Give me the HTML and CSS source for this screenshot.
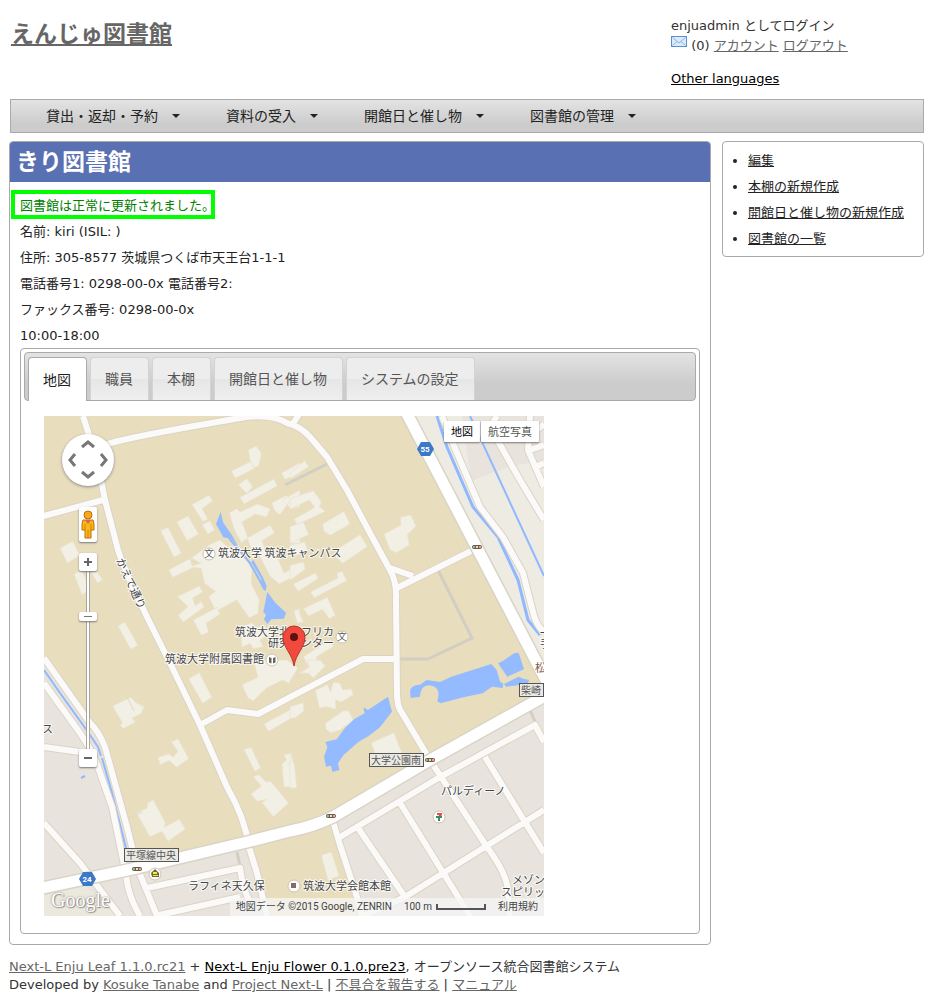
FILE: index.html
```html
<!DOCTYPE html>
<html lang="ja">
<head>
<meta charset="utf-8">
<meta name="viewport" content="width=device-width, initial-scale=1">
<title>きり図書館 - えんじゅ図書館</title>
<link rel="stylesheet" href="styles.css">
</head>
<body>
<header class="header">
  <h1 class="site-title"><a href="#">えんじゅ図書館</a></h1>
  <div class="account">
    <p>enjuadmin としてログイン</p>
    <p>
      <svg class="mail" viewBox="0 0 16 11" aria-hidden="true"><rect x=".5" y=".5" width="15" height="10" fill="#dcebfb" stroke="#5b8fce"/><path d="M1.500 1.500 8 7l6.500-5.500M1.500 9.500 6 5.500M14.500 9.500 10 5.500" fill="none" stroke="#8db4e2"/></svg>
      (0) <a href="#">アカウント</a> <a href="#">ログアウト</a>
    </p>
    <p class="languages"><a href="#">Other languages</a></p>
  </div>
</header>

<nav class="menu">
  <a href="#">貸出・返却・予約</a>
  <a href="#">資料の受入</a>
  <a href="#">開館日と催し物</a>
  <a href="#">図書館の管理</a>
</nav>

<div class="columns">
  <main class="library">
    <h2 class="library-title">きり図書館</h2>
    <div class="library-body">
      <p class="notice">図書館は正常に更新されました。</p>
      <p>名前: kiri (ISIL: )</p>
      <p>住所: 305-8577 茨城県つくば市天王台1-1-1</p>
      <p>電話番号1: 0298-00-0x 電話番号2:</p>
      <p>ファックス番号: 0298-00-0x</p>
      <p>10:00-18:00</p>
      <section class="tabs">
        <div class="tab-list" role="tablist">
          <button type="button" role="tab" class="tab active" aria-selected="true">地図</button>
          <button type="button" role="tab" class="tab" aria-selected="false">職員</button>
          <button type="button" role="tab" class="tab" aria-selected="false">本棚</button>
          <button type="button" role="tab" class="tab" aria-selected="false">開館日と催し物</button>
          <button type="button" role="tab" class="tab" aria-selected="false">システムの設定</button>
        </div>
        <div class="panel" role="tabpanel">
          <div class="map">
            <svg class="map-canvas" viewBox="44 416 500 500" aria-label="地図">
              <rect x="44" y="416" width="500" height="500" fill="#e8ddbd"/>
              <!-- districts -->
              <path d="M44 658 90 723 105 747 127 827 137 868 247 842 267 916H44Z" fill="#e8e4dd"/>
              <path d="M403 416H544V675L538 672Z" fill="#eeebe3"/>
              <path d="M462 416H544V460L508 467 471 481Z" fill="#e8e4dd"/>
              <path d="M333 817 430 760 544 695V916H362L340 847Z" fill="#e8e4dd"/>
              <path d="M44 889 80 881 120 916H44Z" fill="#ebe8dd"/>

              <!-- buildings -->
              <g fill="#f2efe4" stroke="#e8e3d1" stroke-width="2">
                <g transform="translate(40 410) scale(.3333)">
                  <path d="M625 120 648 108 664 130 656 168 640 174 630 150ZM574 183 634 154 644 175 586 205ZM595 224 620 206 638 230 620 250ZM600 262 702 207 712 228 612 282ZM724 190 780 158V190L735 208Z"/>
                  <path d="M456 284 506 256 518 272 486 296 504 328 488 334ZM410 336 444 318 476 372 442 392ZM486 344 510 332 524 360 504 372ZM362 362 384 352 424 430 402 442ZM60 414 98 394 120 436 82 460ZM102 492 126 480 150 540 126 554ZM150 480 166 478 188 510 172 518ZM234 648 254 636 294 706 272 718Z"/>
                  <path d="M568 308 590 296 600 306 652 282 690 296 680 322 646 312 606 336 624 384 604 398 582 356ZM622 384 690 346 704 368 666 392 676 420 702 418 732 490 780 460V490L718 522 690 498 660 440 638 428ZM696 278 740 256 752 270 720 314 702 300ZM728 270 780 240V290L752 296ZM764 334 780 322V350ZM748 382 780 366V400H756Z"/>
                  <path d="M386 480 450 446 456 468 484 460 454 444 506 406 540 390 566 414 594 404 636 480 634 520 658 570 654 610 628 624 590 570 528 604 506 560 526 544 494 520 484 476 462 472 398 502Z"/>
                  <path d="M412 560 478 528 488 546 458 564 466 588 484 574 492 592 430 636 414 616 444 590ZM460 630 532 592 540 612 498 640 506 666 484 676ZM602 652 636 638 650 654 672 644 688 672 660 690 670 710 640 716 630 700 606 712ZM762 610 780 596V640Z"/>
                </g>
                <g transform="translate(290 410) scale(.3333)">
                  <path d="M0 190 44 152 56 170 0 206ZM0 266 70 242 94 276 88 290 106 304 26 342 12 328 74 292 58 270 0 298ZM98 342 162 304 180 342 120 376 102 364ZM0 350 40 336 56 374 0 400ZM144 416 210 374 232 410 158 460 136 440ZM0 406 44 396 54 424 0 442ZM282 372 332 346V322L362 314 378 348 352 374 358 404 320 428 300 420Z"/>
                  <path d="M0 466 40 456 46 478 0 510ZM10 522 78 488 84 506 24 544ZM62 546 144 504 140 490 156 484 170 512 72 564ZM40 596 112 562 136 616 118 626 98 598 56 618ZM12 602 24 598 40 636 22 640ZM40 740 120 690 130 710 80 740 80 770 60 776Z"/>
                </g>
                <g transform="translate(40 660) scale(.3333)">
                  <path d="M446 56 478 38 516 112 488 130ZM218 138 272 112 290 130 312 140 304 160 276 174 286 186 250 206 240 196 248 188 230 160ZM606 74 654 52 640 0H740L774 24 746 70 728 60 680 84 640 122 624 114ZM672 192 734 158 780 134V160L686 214ZM354 292 386 282 400 292 414 274 394 246 414 236 446 296 410 322 388 302 360 314Z"/>
                  <path d="M290 460 322 444V430L340 420 376 488 372 502 418 478 436 508 384 544 366 514 330 530ZM612 268 634 262 662 324 644 334ZM732 284 754 280 758 296 748 310 770 382 732 380 726 312 740 300ZM640 350 656 344 678 366 692 364 746 430 700 470 666 428 680 418 652 424 632 402 664 378Z"/>
                </g>
                <g transform="translate(290 660) scale(.3333)">
                  <path d="M28 40 60 20 52 0H90L106 18 70 54 56 40ZM76 92 112 74 122 96 130 66 150 70 158 90 184 86 190 104 154 126 136 120 138 148 108 140 88 144ZM0 140 40 128 42 152 16 174H0ZM106 190 160 152 176 152 190 180 150 210 122 218 108 208ZM244 248 312 218 336 280 256 284ZM0 282 14 316 20 384H0ZM94 586 124 576 148 648 114 660Z"/>
                </g>
              </g>
              <path d="M121 822 142 812M127 697 134 711" stroke="#ded8c6" fill="none"/>

              <!-- footpaths -->
              <g fill="none" stroke="#d2cec4" stroke-width="3">
                <path d="M285 485 329 463M438 570 472 638 428 659H400M237 852 240 866M530 710 536 724"/>
              </g>

              <!-- water -->
              <g fill="none" stroke="#8fb8ff">
                <path d="M44 670 60 693 88 732 98 747 101 756M102 758 112 793 126 848M81 778 85 776" stroke-width="2"/>
                <path d="M437 416 447 447 473 507 498 537 518 580 528 620 540 635" stroke-width="3"/>
                <path d="M470 416 544 576" stroke-width="2"/>
                <path d="M229 538 250 563 265 590" stroke-width="2"/>
              </g>
              <g fill="#94bbff">
                <path transform="translate(40 410) scale(.3333)" d="M542 306 550 338 576 376 596 412 574 386 550 382 528 342ZM640 450 668 500 680 528 676 544 664 528 664 508 634 456ZM682 546 706 578 738 608 732 626 694 628 682 642 672 628 678 614 670 606Z"/>
                <path transform="translate(290 660) scale(.3333)" d="M294 110 306 155 270 202 236 228 205 246 160 286 144 310 148 330 127 336 123 317 108 320 102 290 112 262 106 246 140 238 165 204 192 178 224 160 220 142 234 150ZM360 92Q364 76 390 74L410 60 450 66 484 50 604 12 620 30 630 64 640 72 638 84 606 80 578 100 520 112 452 130 442 124Q456 78 416 76 392 76 390 110L362 114ZM624 10 640 2 672-20 686-22 702 28 652 50ZM642 72 686 50 700 56 718 60 712 72 648 80Z"/>
              </g>

              <!-- roads: casing, then surface -->
              <g fill="none" stroke-linejoin="round">
                <path stroke="#dad4c6" stroke-width="8" d="M83 416 89 435 102 485 105 500 118 550Q124 570 150 623L170 663 200 725 227 787Q245 818 249 847L257 873 267 916M108 444Q118 440 183 428L240 418Q270 413 287 423 300 426 310 437L327 457 347 490 370 533 390 570Q397 582 396 600L397 693Q397 707 402 713L430 760 487 847Q508 875 508 893L510 916M293 424 299 414M40 517 103 500M397 588 477 548M390 568 413 576M200 725 227 710 258 714 300 692 363 659H397M44 658 90 723Q98 730 105 747L127 827 137 867 157 916M44 683 80 733Q92 750 98 767L112 807 123 860 128 887Q132 903 140 916M44 747 80 752M44 823 80 863 120 916M147 888 240 868Q243 890 250 902M155 916 240 897M332 818 340 845 357 897 362 916M340 837 440 777 535 725 544 742M485 757 544 853M400 803 470 916M358 828 405 897M363 916 405 897 544 810M442 416 457 453 480 507 503 537 523 573 533 612Q536 625 544 632M497 416 490 427 520 480 544 520M530 416 528 450 544 487M530 450 544 445M534 468 544 463M533 433 544 424"/>
                <path stroke="#fbfaf8" stroke-width="6" d="M83 416 89 435 102 485 105 500 118 550Q124 570 150 623L170 663 200 725 227 787Q245 818 249 847L257 873 267 916M108 444Q118 440 183 428L240 418Q270 413 287 423 300 426 310 437L327 457 347 490 370 533 390 570Q397 582 396 600L397 693Q397 707 402 713L430 760 487 847Q508 875 508 893L510 916M293 424 299 414M40 517 103 500M397 588 477 548M390 568 413 576M200 725 227 710 258 714 300 692 363 659H397M44 658 90 723Q98 730 105 747L127 827 137 867 157 916M44 683 80 733Q92 750 98 767L112 807 123 860 128 887Q132 903 140 916M44 747 80 752M44 823 80 863 120 916M147 888 240 868Q243 890 250 902M155 916 240 897M332 818 340 845 357 897 362 916M340 837 440 777 535 725 544 742M485 757 544 853M400 803 470 916M358 828 405 897M363 916 405 897 544 810M442 416 457 453 480 507 503 537 523 573 533 612Q536 625 544 632M497 416 490 427 520 480 544 520M530 416 528 450 544 487M530 450 544 445M534 468 544 463M533 433 544 424"/>
                <path stroke="#dad4c6" stroke-width="14" d="M403 406 477 548 548 684M38 889 137 868 247 842 290 831Q312 827 333 817L430 760 550 693"/>
                <path stroke="#fff" stroke-width="11" d="M403 406 477 548 548 684M38 889 137 868 247 842 290 831Q312 827 333 817L430 760 550 693"/>
              </g>

              <!-- traffic signals -->
              <g fill="#6b5a53"><rect x="472" y="545" width="10" height="4" rx="2"/><rect x="425" y="758" width="10" height="4" rx="2"/><rect x="326" y="814" width="10" height="4" rx="2"/><rect x="132" y="867" width="10" height="4" rx="2"/></g>
              <g fill="#7fc68b"><rect x="473" y="546" width="2" height="2"/><rect x="426" y="759" width="2" height="2"/><rect x="327" y="815" width="2" height="2"/><rect x="133" y="868" width="2" height="2"/></g>
              <g fill="#ffe680"><rect x="476" y="546" width="2" height="2"/><rect x="429" y="759" width="2" height="2"/><rect x="330" y="815" width="2" height="2"/><rect x="136" y="868" width="2" height="2"/></g>
              <g fill="#f59a94"><rect x="479" y="546" width="2" height="2"/><rect x="432" y="759" width="2" height="2"/><rect x="333" y="815" width="2" height="2"/><rect x="139" y="868" width="2" height="2"/></g>

              <!-- route shields -->
              <g fill="#3b78c9"><path d="M421 442H430L434 449 430 456H421L417 449Z"/><path d="M83 872H92L96 879 92 886H83L79 879Z"/></g>
              <g class="shield"><text x="425" y="452">55</text><text x="87" y="882">24</text></g>

              <!-- places -->
              <g fill="#fff" stroke="#cbc4b2">
                <circle cx="209" cy="554" r="6"/><circle cx="342" cy="637" r="6"/><circle cx="272" cy="660" r="6"/><circle cx="439" cy="817" r="6"/><circle cx="294" cy="886" r="6"/><circle cx="155" cy="874" r="6"/>
              </g>
              <path d="M269 657 271.500 658V663.500L269 662.500ZM275.500 657 273 658V663.500L275.500 662.500Z" fill="#6b6560"/>
              <rect x="291" y="883" width="5" height="5" fill="#8b6b61"/>
              <path d="M437 813H442V815L440 818H438L439 815H437Z" fill="#d9534a"/><path d="M436 816H442V818H436ZM438 818H440V821H438Z" fill="#3b8a62"/>
              <path d="M151 873 155 869 159 873V877H152Z" fill="#6e6a3c"/><path d="M153 872H157V874H153ZM153 875H158V876H153Z" fill="#ffe93b"/>
              <g class="kanji-icon"><text x="209" y="557">文</text><text x="342" y="640">文</text></g>
              <g class="label">
                <text x="218" y="557">筑波大学 筑波キャンパス</text>
                <text x="235" y="636">筑波大学北アフリカ</text>
                <text x="268" y="647">研究センター</text>
                <text x="165" y="663">筑波大学附属図書館</text>
                <text x="188" y="890">ラフィネ天久保</text>
                <text x="303" y="890">筑波大学会館本館</text>
                <text x="441" y="795">パルディーノ</text>
                <text x="512" y="884">メゾン</text>
                <text x="501" y="896">スピリッ</text>
                <text x="42" y="733">ス</text>
                <text x="540" y="637">一</text>
                <text x="540" y="648">手</text>
                <text x="535" y="672" fill="#855548">松</text>
                <text class="street" x="132" y="583" transform="rotate(65 132 583)">かえで通り</text>
              </g>
              <g fill="#ebe9e4" stroke="#555"><rect x="369.500" y="753.500" width="54" height="13"/><rect x="124.500" y="848.500" width="54" height="13"/><rect x="519.500" y="683.500" width="24" height="13"/></g>
              <g class="crossing"><text x="371" y="764">大学公園南</text><text x="126" y="859">平塚線中央</text><text x="521" y="694">柴崎</text></g>

              <!-- marker -->
              <path d="M294 666C292 653 283 648 283 637A11 11 0 0 1 305 637C305 648 296 653 294 666Z" fill="#f1493e" stroke="#b5352c"/>
              <circle cx="294" cy="637" r="4" fill="#5c1310"/>
            </svg>

            <div class="pan">
              <svg viewBox="0 0 52 52" aria-hidden="true"><path d="M20 13 26 8 32 13M20 38 26 43 32 38M13 20 8 26 13 32M39 20 44 26 39 32" fill="none" stroke="#777" stroke-width="3"/></svg>
            </div>
            <button type="button" class="pegman" aria-label="ストリートビュー">
              <svg viewBox="0 0 18 35"><path d="M4 13H14L15 17V23H12V31H6V23H3V17Z" fill="#fbb713" stroke="#b96f10"/><path d="M9 23V31M6 17V23M12 17V23" stroke="#cf8213"/><circle cx="9" cy="8" r="4" fill="#f8a91b" stroke="#b96f10"/><path d="M6 13H12L9 17Z" fill="#f0575a"/></svg>
            </button>
            <div class="zoom">
              <button type="button" aria-label="ズームイン"><svg viewBox="0 0 18 18"><path d="M5 9H13M9 5V13" stroke="#666" stroke-width="2"/></svg></button>
              <input type="range" min="0" max="100" value="76" aria-label="ズーム">
              <button type="button" aria-label="ズームアウト"><svg viewBox="0 0 18 18"><path d="M5 9H13" stroke="#666" stroke-width="2"/></svg></button>
            </div>
            <div class="map-type">
              <button type="button" class="selected">地図</button>
              <button type="button">航空写真</button>
            </div>
            <a class="brand" href="#">Google</a>
            <div class="credits">
              <span>地図データ ©2015 Google, ZENRIN</span>
              <span class="scale">100 m<svg viewBox="0 0 50 6" aria-hidden="true"><path d="M1 0V5H49V0" fill="none" stroke="#555" stroke-width="2"/></svg></span>
              <a href="#">利用規約</a>
            </div>
          </div>
        </div>
      </section>
    </div>
  </main>

  <aside class="actions">
    <ul>
      <li><a href="#">編集</a></li>
      <li><a href="#">本棚の新規作成</a></li>
      <li><a href="#">開館日と催し物の新規作成</a></li>
      <li><a href="#">図書館の一覧</a></li>
    </ul>
  </aside>
</div>

<footer class="footer">
  <p><a href="#">Next-L Enju Leaf 1.1.0.rc21</a> + <a class="unvisited" href="#">Next-L Enju Flower 0.1.0.pre23</a>, オープンソース統合図書館システム</p>
  <p>Developed by <a href="#">Kosuke Tanabe</a> and <a href="#">Project Next-L</a> | <a href="#">不具合を報告する</a> | <a href="#">マニュアル</a></p>
</footer>
</body>
</html>
```
FILE: styles.css
```css
* {
  box-sizing: border-box;
}

body {
  margin: 0;
  padding: 0 22px 0 9px;
  background: #fff;
  color: #333;
  font: 13px/18px "DejaVu Sans", "Noto Sans CJK JP", sans-serif;
}

p, h1, h2, ul {
  margin: 0;
}

a {
  color: #666;
}

button {
  margin: 0;
  padding: 0;
  font-family: inherit;
  cursor: pointer;
}

.header {
  display: flex;
  justify-content: space-between;
  height: 99px;
}

.site-title {
  padding: 18px 2px;
  font-size: 23px;
  line-height: 32px;
}

.account {
  width: 253px;
  padding-top: 16px;
  line-height: 20px;
}

.mail {
  width: 16px;
  height: 11px;
  margin-bottom: 3px;
}

.languages {
  margin-top: 13px;
}

.languages a, .unvisited {
  color: #000;
}

.menu {
  display: flex;
  gap: 46px;
  height: 34px;
  margin: 0 0 8px 1px;
  padding: 0 35px;
  border: 1px solid #aaa;
  background: linear-gradient(#e3e3e3, #ccc 75%);
}

.menu a {
  display: flex;
  align-items: center;
  gap: 14px;
  color: #222;
  font-size: 14px;
  text-decoration: none;
}

.menu a::after {
  content: "";
  border: 4px solid transparent;
  border-top-color: #222;
  border-bottom: 0;
}

.columns {
  display: flex;
  align-items: flex-start;
  gap: 11px;
}

.library {
  flex: 1;
  border: 1px solid #aaa;
  border-radius: 4px;
  color: #222;
}

.library-title {
  padding: 0 6px;
  border-radius: 3px 3px 0 0;
  background: #5970b2;
  color: #fff;
  font-size: 23px;
  line-height: 40px;
}

.library-body {
  padding: 11px 10px 10px;
  line-height: 26px;
}

.notice {
  position: relative;
  width: max-content;
  color: #008000;
}

.notice::after {
  content: "";
  position: absolute;
  inset: -3px 0 0 -9px;
  border: 4px solid #0f0;
}

.tabs {
  margin-top: -1px;
  padding: 3px;
  border: 1px solid #aaa;
  border-radius: 4px;
}

.tab-list {
  display: flex;
  gap: 3px;
  height: 49px;
  padding: 4px 3px 0;
  border: 1px solid #aaa;
  border-radius: 4px;
  background: linear-gradient(#e3e3e3, #ccc 65%);
}

.tab {
  height: 43px;
  padding: 0 15px 2px 14px;
  border: 1px solid #d3d3d3;
  border-bottom: 0;
  border-radius: 4px 4px 0 0;
  background: linear-gradient(#ededed 50%, #e6e6e6 50%, #efefef);
  color: #555;
  font-size: 14px;
}

.tab.active {
  height: 44px;
  border-color: #aaa;
  background: #fff;
  color: #222;
}

.panel {
  padding: 15px 20px 14px;
}

.map {
  position: relative;
  width: 500px;
  max-width: 100%;
  overflow: hidden;
  line-height: 14px;
}

.map-canvas {
  display: block;
  width: 100%;
}

.map-canvas text {
  font-family: "Noto Sans CJK JP", sans-serif;
}

.label {
  fill: #444;
  font-size: 11px;
  stroke: #fff;
  stroke-opacity: .8;
  stroke-width: 2px;
  paint-order: stroke;
}

.street {
  text-anchor: middle;
  dominant-baseline: central;
}

.crossing {
  fill: #555;
  font-size: 10px;
}

.kanji-icon {
  fill: #555;
  font-size: 9px;
  text-anchor: middle;
}

.map-canvas .shield text {
  fill: #fff;
  font: bold 8px Roboto, sans-serif;
  text-anchor: middle;
}

.pan {
  position: absolute;
  top: 18px;
  left: 18px;
  width: 52px;
  height: 52px;
  border-radius: 50%;
  background: #fff;
  box-shadow: 0 1px 3px #888;
}

.map button {
  border: 0;
  border-radius: 2px;
  background: #fff;
  box-shadow: 0 1px 2px #777;
}

.map button svg {
  display: block;
}

.pegman {
  position: absolute;
  top: 91px;
  left: 35px;
  width: 18px;
  height: 35px;
}

.zoom {
  position: absolute;
  top: 137px;
  left: 35px;
  display: flex;
  flex-direction: column;
  width: 18px;
}

.zoom button {
  position: relative;
  width: 18px;
  height: 18px;
}

.zoom input {
  width: 18px;
  height: 178px;
  margin: 0;
  appearance: none;
  background: linear-gradient(#aaa49a, #aaa49a) 7px 0 / 4px 100% no-repeat;
  writing-mode: vertical-lr;
  direction: rtl;
}

.zoom input::-webkit-slider-runnable-track {
  width: 18px;
  height: 100%;
  background: linear-gradient(#fff, #fff) 8px 0 / 2px 100% no-repeat;
}

.zoom input::-webkit-slider-thumb {
  width: 18px;
  height: 9px;
  appearance: none;
  border-radius: 2px;
  background: linear-gradient(#777, #777) 5px 4px / 8px 1px no-repeat #fff;
  box-shadow: 0 1px 2px #777;
}

.map-type {
  position: absolute;
  top: 5px;
  right: 5px;
  display: flex;
  gap: 1px;
}

.map-type button {
  height: 21px;
  padding: 0 7px 2px;
  border-radius: 1px;
  color: #555;
  font-size: 11px;
}

.map-type .selected {
  color: #000;
}

.brand {
  position: absolute;
  bottom: 4px;
  left: 7px;
  color: #fff;
  font: 20px/24px "Liberation Serif", serif;
  text-decoration: none;
  text-shadow: 0 0 2px #777, 1px 1px 1px #999;
}

.credits {
  position: absolute;
  right: 0;
  bottom: 0;
  display: flex;
  gap: 12px;
  padding: 2px 6px;
  background: rgba(245, 245, 245, .75);
  color: #444;
  font: 10px/14px Roboto, "Noto Sans CJK JP", sans-serif;
}

.credits a {
  color: #444;
  text-decoration: none;
}

.scale {
  display: flex;
  align-items: center;
  gap: 4px;
}

.scale svg {
  width: 50px;
  height: 6px;
}

.actions {
  width: 202px;
  border: 1px solid #aaa;
  border-radius: 4px;
  color: #222;
}

.actions ul {
  padding: 6px 0 4px 25px;
  line-height: 26px;
}

.actions a {
  color: #222;
}

.footer {
  padding: 13px 0 8px;
}
```
